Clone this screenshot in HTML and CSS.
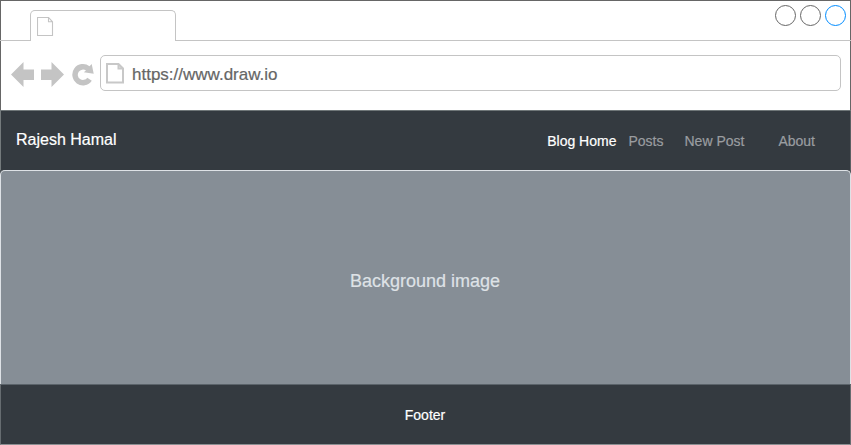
FILE: index.html
```html
<!DOCTYPE html>
<html lang="en">
<head>
<meta charset="utf-8">
<title>Blog Home</title>
<link rel="stylesheet" href="styles.css">
</head>
<body>
<div class="window">
  <div class="tabs">
    <div class="tabs-start"></div>
    <div class="tab">
      <svg class="tab-icon" width="17" height="20" viewBox="0 0 17 20"><path d="M.5 .5H11.5L15.5 4.8V18.5H.5ZM11.5 .5V4.8H15.5"/></svg>
    </div>
    <div class="tabs-end">
      <span class="control"></span><span class="control"></span><span class="control active"></span>
    </div>
  </div>
  <div class="toolbar">
    <svg class="arrows" width="84" height="26" viewBox="0 0 84 26">
      <path d="M0 12.500L12.500 0V7.500H23V18H12.500V25Z"/>
      <path d="M53 12.500L40.500 0V7.500H30V18H40.500V25Z"/>
      <path d="M80.700 2L82.700 11.700L72.800 10.200L75 8.500A5.200 5.200 0 1 0 76.300 15.700L80.800 18.800A10.700 10.700 0 1 1 78.500 4.200Z"/>
    </svg>
    <div class="address">
      <svg width="18" height="21" viewBox="0 0 18 21"><path d="M1 1H12.500L17 5.500V19.500H1ZM12.500 1V5.500H17"/></svg>
      <span>https://www.draw.io</span>
    </div>
  </div>
  <nav class="navbar">
    <span class="brand">Rajesh Hamal</span>
    <span class="link current">Blog Home</span>
    <span class="link posts">Posts</span>
    <span class="link new-post">New Post</span>
    <span class="link about">About</span>
  </nav>
  <div class="hero-wrap"><main class="hero"><span>Background image</span></main></div>
  <footer class="footer">Footer</footer>
</div>
</body>
</html>
```

FILE: styles.css
```css
* { box-sizing: border-box; }
body { margin: 0; background: #fff; font-family: "Liberation Sans", Arial, sans-serif; -webkit-text-stroke: 0.2px currentColor; }
.window { width: 851px; height: 445px; display: flex; flex-direction: column; background: linear-gradient(#666, #666) 0 0 / 100% 1px no-repeat, linear-gradient(#666, #666) 0 0 / 1px 100% no-repeat, linear-gradient(#666, #666) 100% 0 / 1px 100% no-repeat; }
.tabs { display: flex; height: 41px; }
.tabs-start { width: 30px; border-bottom: 1px solid #c4c4c4; }
.tab { width: 146px; margin-top: 10px; padding: 7px 0 0 7px; border: 1px solid #c4c4c4; border-bottom: 0; border-radius: 5px 5px 0 0; }
.tab-icon { display: block; margin-left: -1px; margin-top: -1px; fill: none; stroke: #c4c4c4; stroke-width: 1.1; }
.tabs-end { flex: 1; display: flex; justify-content: flex-end; gap: 4px; padding: 5px 5px 0 0; border-bottom: 1px solid #c4c4c4; }
.control { width: 21px; height: 21px; border: 1px solid #666; border-radius: 50%; }
.control.active { border-color: #008cff; }
.toolbar { display: flex; height: 69px; padding: 14px 10px 0 11px; }
.arrows { flex: none; margin-top: 7px; fill: #c4c4c4; }
.address { display: flex; align-items: center; flex: 1; height: 36px; margin-left: 5px; padding-left: 5px; border: 1px solid #c4c4c4; border-radius: 5px; color: #666; font-size: 17px; line-height: 20px; }
.address svg { fill: none; stroke: #c8c8c8; stroke-width: 2; margin-right: 8px; margin-top: 1px; }
.address span { margin-top: 3px; }
.navbar { display: flex; align-items: center; height: 60px; padding: 0 36px 0 16px; background: #343a40; border-top: 1px solid #6f7678; box-shadow: inset 1px 0 #747a7c, inset -1px 0 #5b6063; font-size: 14px; }
.brand { flex: 1; color: #fff; font-size: 16px; line-height: 20px; margin-bottom: 2px; }
.link { color: #9a9da0; white-space: nowrap; line-height: 18px; }
.current { color: #fff; }
.posts { margin-left: 12px; }
.new-post { margin-left: 21px; }
.about { margin-left: 34px; }
.hero-wrap { background: #50565b; }
.hero { display: flex; align-items: center; justify-content: center; height: 214px; padding: 7px 1px 0 0; background: #868e96; border: 1px solid #dee2e6; border-bottom: 0; border-radius: 5px 5px 0 0; color: #dee2e6; font-size: 18px; }
.footer { display: flex; align-items: center; justify-content: center; height: 61px; padding: 1px 1px 0 0; background: #343a40; border: 1px solid #666c70; border-top-color: #5b636a; border-bottom-color: #8b8f92; color: #fff; font-size: 14px; }
```
